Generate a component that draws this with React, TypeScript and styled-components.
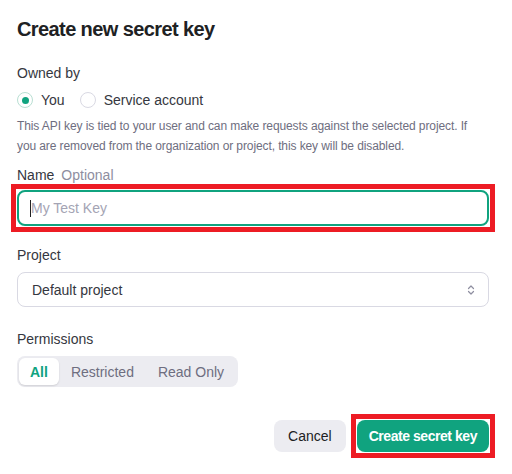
import React from "react";
import styled, { createGlobalStyle } from "styled-components";

const Global = createGlobalStyle`
  html, body { margin: 0; padding: 0; background: #ffffff; }
  body { font-family: "Liberation Sans", Arial, sans-serif; color: #353740; }
  * { box-sizing: border-box; }
`;

const Dialog = styled.div`
  width: 512px;
  height: 474px;
  padding: 17px 23px 0 17px;
  display: flex;
  flex-direction: column;
  background: #fff;
`;

const Title = styled.h1`
  margin: 0;
  font-size: 20px;
  line-height: 24px;
  font-weight: 700;
  color: #202123;
  letter-spacing: -0.6px;
`;

const Label = styled.div<{ $top: number }>`
  margin-top: ${(p) => p.$top}px;
  font-size: 14px;
  line-height: 20px;
  color: #353740;
  display: flex;
  gap: 7px;
`;

const Optional = styled.span`
  color: #8e8ea0;
`;

const RadioRow = styled.div`
  margin-top: 7px;
  display: flex;
  align-items: center;
  height: 20px;
  gap: 15px;
`;

const RadioOption = styled.label`
  display: flex;
  align-items: center;
  gap: 8px;
  font-size: 14px;
  color: #353740;
`;

const RadioCircle = styled.span<{ $checked?: boolean }>`
  width: 16px;
  height: 16px;
  border-radius: 50%;
  border: 1px solid ${(p) => (p.$checked ? "#b9dfd3" : "#d9d9e3")};
  display: flex;
  align-items: center;
  justify-content: center;
  &::after {
    content: "";
    width: 7px;
    height: 7px;
    border-radius: 50%;
    background: ${(p) => (p.$checked ? "#10a37f" : "transparent")};
  }
`;

const Description = styled.p`
  margin: 6px 0 0;
  font-size: 12px;
  line-height: 20px;
  color: #6e6e80;
  letter-spacing: -0.1px;
`;

const Annotated = styled.div<{ $top: number }>`
  position: relative;
  margin-top: ${(p) => p.$top}px;
`;

const RedBox = styled.div`
  position: absolute;
  inset: -6px -6px -6px -6px;
  border: 5px solid #ed1c24;
  pointer-events: none;
`;

const TextInput = styled.input`
  display: block;
  width: 100%;
  height: 36px;
  border: 2px solid #10a37f;
  border-radius: 8px;
  padding: 0 12px;
  font-family: inherit;
  font-size: 14px;
  color: #353740;
  outline: none;
  background: #fff;
  &::placeholder { color: #a4a4b4; }
`;

const Caret = styled.span`
  position: absolute;
  left: 13px;
  top: 10px;
  width: 1px;
  height: 17px;
  background: #202123;
`;

const Select = styled.div`
  margin-top: 7px;
  height: 35px;
  border: 1px solid #d9d9e3;
  border-radius: 8px;
  padding: 0 12px 0 14px;
  display: flex;
  align-items: center;
  justify-content: space-between;
  font-size: 14px;
  color: #353740;
`;

const Segmented = styled.div`
  margin-top: 7px;
  align-self: flex-start;
  display: flex;
  padding: 2px;
  height: 31px;
  background: #ececf1;
  border-radius: 8px;
`;

const Segment = styled.div<{ $active?: boolean }>`
  padding: 0 ${(p) => (p.$active ? 11 : 12)}px;
  display: flex;
  align-items: center;
  font-size: 14px;
  border-radius: 6px;
  font-weight: ${(p) => (p.$active ? 700 : 400)};
  color: ${(p) => (p.$active ? "#10a37f" : "#6e6e80")};
  background: ${(p) => (p.$active ? "#ffffff" : "transparent")};
  box-shadow: ${(p) => (p.$active ? "0 1px 2px rgba(0,0,0,0.12)" : "none")};
`;

const Footer = styled.div`
  margin-top: 33px;
  display: flex;
  justify-content: flex-end;
  gap: 11px;
`;

const Button = styled.button<{ $primary?: boolean }>`
  height: 32px;
  border: none;
  border-radius: 8px;
  padding: 0 ${(p) => (p.$primary ? 12 : 14)}px;
  font-family: inherit;
  font-size: 14px;
  font-weight: ${(p) => (p.$primary ? 700 : 400)};
  letter-spacing: ${(p) => (p.$primary ? "-0.45px" : "0")};
  color: ${(p) => (p.$primary ? "#ffffff" : "#202123")};
  background: ${(p) => (p.$primary ? "#10a37f" : "#ececf1")};
  display: block;
`;

const ButtonWrap = styled.div`
  position: relative;
`;

function UpDown() {
  return (
    <svg width="10" height="12" viewBox="0 0 10 12" fill="none" stroke="#8e8ea0" strokeWidth="1.2" strokeLinecap="round" strokeLinejoin="round">
      <path d="M2.5 4.5 L5 2 L7.5 4.5" />
      <path d="M2.5 7.5 L5 10 L7.5 7.5" />
    </svg>
  );
}

export default function App() {
  return (
    <>
      <Global />
      <Dialog>
        <Title>Create new secret key</Title>
        <Label $top={22}>Owned by</Label>
        <RadioRow>
          <RadioOption>
            <RadioCircle $checked />
            You
          </RadioOption>
          <RadioOption>
            <RadioCircle />
            Service account
          </RadioOption>
        </RadioRow>
        <Description>
          This API key is tied to your user and can make requests against the selected project. If
          you are removed from the organization or project, this key will be disabled.
        </Description>
        <Label $top={9}>
          Name <Optional>Optional</Optional>
        </Label>
        <Annotated $top={5}>
          <TextInput placeholder="My Test Key" />
          <Caret />
          <RedBox />
        </Annotated>
        <Label $top={19}>Project</Label>
        <Select>
          <span>Default project</span>
          <UpDown />
        </Select>
        <Label $top={22}>Permissions</Label>
        <Segmented>
          <Segment $active>All</Segment>
          <Segment>Restricted</Segment>
          <Segment>Read Only</Segment>
        </Segmented>
        <Footer>
          <Button>Cancel</Button>
          <ButtonWrap>
            <Button $primary>Create secret key</Button>
            <RedBox />
          </ButtonWrap>
        </Footer>
      </Dialog>
    </>
  );
}
